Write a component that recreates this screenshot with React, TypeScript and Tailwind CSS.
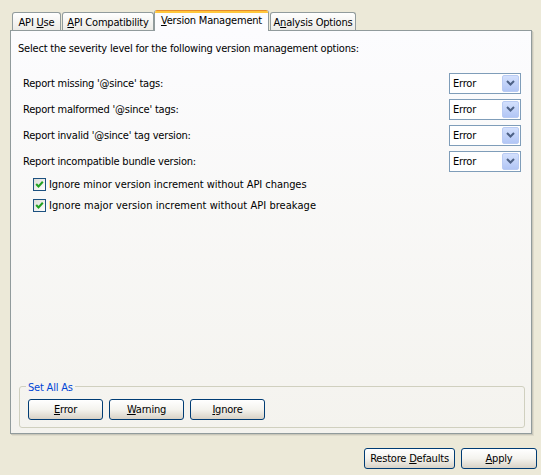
import React from "react";

const FONT = { fontFamily: 'Tahoma, "DejaVu Sans Condensed", "DejaVu Sans", sans-serif' };

function U({ children }: { children: React.ReactNode }) {
  return <span className="underline underline-offset-[1px]">{children}</span>;
}

function Tab({ children, w, ml }: { children: React.ReactNode; w: string; ml: string }) {
  return (
    <div
      className={`${w} ${ml} h-[18px] border border-b-0 border-[#919B9C] rounded-t-[3px] bg-linear-to-b from-[#FFFFFF] to-[#ECEBE6] flex items-center justify-center pt-[1px] text-[11px] leading-[13px] text-black`}
    >
      {children}
    </div>
  );
}

function SelectedTab({ children }: { children: React.ReactNode }) {
  return (
    <div className="relative z-10 w-[115px] h-[21px] -mb-px border-x border-[#919B9C] rounded-t-[3px] bg-[#FCFCFE] flex flex-col text-[11px] leading-[13px] text-black overflow-hidden">
      <div className="h-px bg-[#E68B2C] shrink-0" />
      <div className="h-[2px] bg-[#FFC73C] shrink-0" />
      <div className="flex-1 flex items-start justify-center pt-[1px]">{children}</div>
    </div>
  );
}

function Chevron() {
  return (
    <svg width="9" height="6" viewBox="0 0 9 6">
      <polyline points="1,1 4.5,4.5 8,1" fill="none" stroke="#4D6185" strokeWidth="2" />
    </svg>
  );
}

function Combo() {
  return (
    <div className="w-[72px] h-[21px] border border-[#7F9DB9] bg-white flex items-center">
      <span className="flex-1 pl-[3px] text-[11px] leading-[13px] text-black">Error</span>
      <div className="w-[17px] h-[17px] mr-[1px] rounded-[2px] border border-[#B9CBF3] bg-linear-to-b from-[#D3E0FD] to-[#B2C6F5] flex items-center justify-center">
        <Chevron />
      </div>
    </div>
  );
}

function Check() {
  return (
    <div className="w-[13px] h-[13px] border border-[#1C5180] bg-linear-to-br from-[#DCDCD7] to-[#FFFFFF] flex items-center justify-center">
      <svg width="9" height="9" viewBox="0 0 9 9">
        <polyline points="1.2,4 3.5,6.5 7.8,1.8" fill="none" stroke="#21A121" strokeWidth="2" />
      </svg>
    </div>
  );
}

function Btn({ children, w }: { children: React.ReactNode; w: string }) {
  return (
    <div
      className={`${w} h-[21px] rounded-[3px] border border-[#003C74] bg-linear-to-b from-[#FFFFFF] via-[#F4F3EE] to-[#D8D2C6] flex items-center justify-center text-[11px] leading-[13px] text-black`}
    >
      {children}
    </div>
  );
}

const rows = [
  "Report missing '@since' tags:",
  "Report malformed '@since' tags:",
  "Report invalid '@since' tag version:",
  "Report incompatible bundle version:",
];

export default function App() {
  return (
    <div style={FONT} className="w-[541px] h-[475px] bg-[#ECE9D8] flex flex-col pt-[10px] overflow-hidden tracking-[-0.2px]">
      <div className="h-[20px] pl-[10px] flex items-end">
        <Tab w="w-[49px]" ml="ml-[2px]">
          <span>
            API <U>U</U>se
          </span>
        </Tab>
        <Tab w="w-[92px]" ml="ml-[1px]">
          <span>
            <U>A</U>PI Compatibility
          </span>
        </Tab>
        <SelectedTab>
          <span>
            <U>V</U>ersion Management
          </span>
        </SelectedTab>
        <Tab w="w-[86px]" ml="ml-[1px]">
          <span>
            A<U>n</U>alysis Options
          </span>
        </Tab>
      </div>

      <div className="ml-[10px] w-[522px] h-[404px] border border-[#919B9C] bg-linear-to-b from-[#FCFCFE] to-[#F4F3EE] shadow-[1px_1px_0_#C9C7BA,2px_2px_0_#DEDBCB] flex flex-col pl-[7px] pr-[10px] pt-[11px] pb-[5px] text-[11px] leading-[13px] text-black">
        <div>Select the severity level for the following version management options:</div>
        <div className="mt-[15px] flex flex-col">
          {rows.map((r) => (
            <div key={r} className="h-[26px] flex items-center justify-between">
              <span className="pl-[5px]">{r}</span>
              <Combo />
            </div>
          ))}
          <div className="h-[21px] flex items-center pl-[15px] gap-[3px]">
            <Check />
            <span className="tracking-[-0.05px]">Ignore minor version increment without API changes</span>
          </div>
          <div className="h-[21px] flex items-center pl-[15px] gap-[3px]">
            <Check />
            <span className="tracking-[0.05px]">Ignore major version increment without API breakage</span>
          </div>
        </div>
        <div className="flex-1" />
        <div className="relative ml-[1px] w-[506px] h-[42px] border border-[#D0D0BF] rounded-[3px] pl-[8px] pt-[12px]">
          <span className="absolute left-[6px] -top-[6px] px-[2px] bg-[#F5F4F0] text-[#0046D5] leading-[13px]">
            Set All As
          </span>
          <div className="flex gap-[6px]">
            <Btn w="w-[75px]">
              <span>
                <U>E</U>rror
              </span>
            </Btn>
            <Btn w="w-[75px]">
              <span>
                <U>W</U>arning
              </span>
            </Btn>
            <Btn w="w-[75px]">
              <span>
                <U>I</U>gnore
              </span>
            </Btn>
          </div>
        </div>
      </div>

      <div className="mt-[14px] flex justify-end gap-[6px] pr-[4px]">
        <Btn w="w-[91px]">
          <span>
            Restore <U>D</U>efaults
          </span>
        </Btn>
        <Btn w="w-[76px]">
          <span>
            <U>A</U>pply
          </span>
        </Btn>
      </div>
    </div>
  );
}
